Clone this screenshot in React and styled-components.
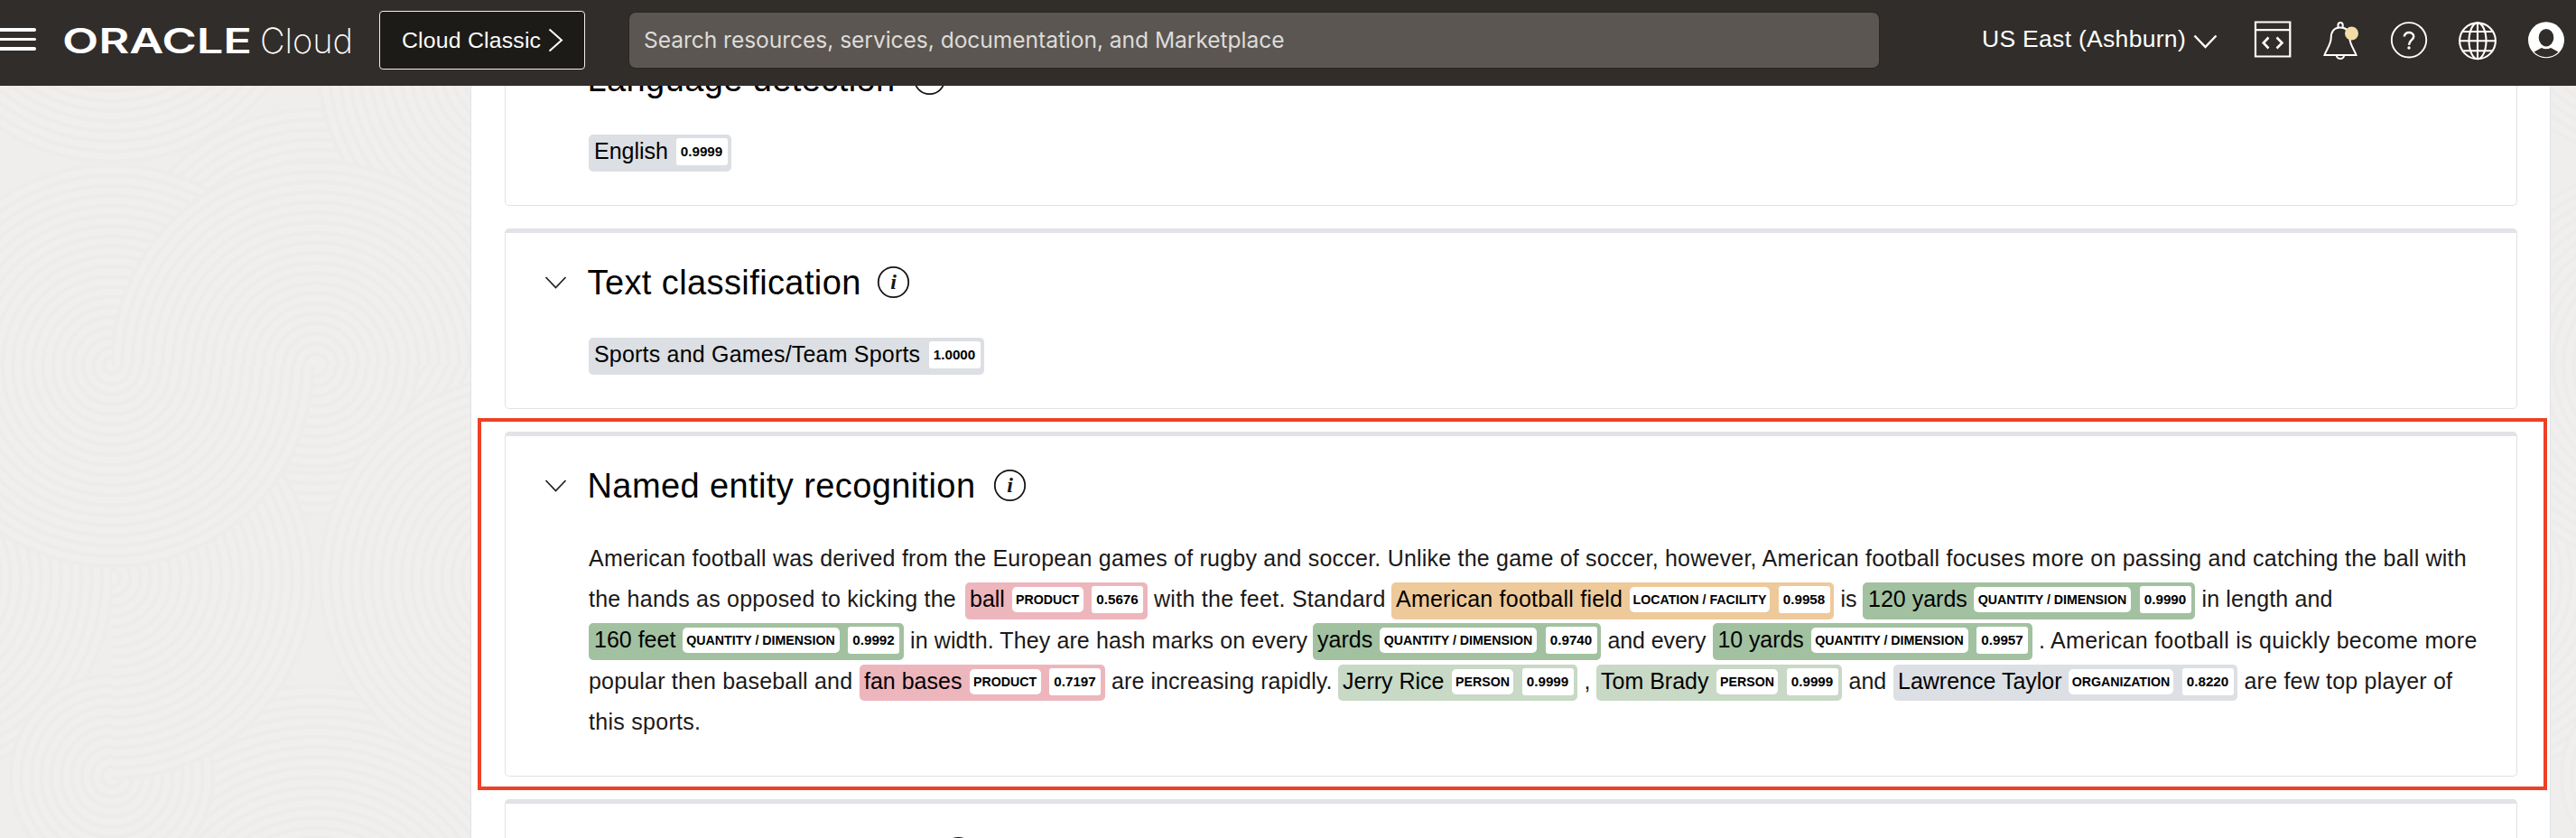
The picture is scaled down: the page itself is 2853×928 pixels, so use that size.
import React from "react";
import styled, { createGlobalStyle } from "styled-components";

const Global = createGlobalStyle`
  * { box-sizing: border-box; }
  html, body { margin: 0; padding: 0; overflow: hidden; }
  body { font-family: "Liberation Sans", Arial, sans-serif; color: #000; background: #fff; }
`;

const Page = styled.div`
  width: 2853px;
  height: 928px;
  overflow: hidden;
  position: relative;
`;

const Header = styled.header`
  position: absolute;
  inset: 0 0 auto 0;
  z-index: 2;
  height: 95px;
  background: #312d2a;
  color: #fff;
  display: flex;
  align-items: flex-start;
`;

const MenuButton = styled.div`
  width: 40px;
  margin: 31px 28px 0 0;
  display: flex;
  flex-direction: column;
  gap: 7px;
`;

const MenuBar = styled.span`
  height: 3.5px;
  background: #fff;
  border-radius: 0 2px 2px 0;
`;

const Logo = styled.svg`
  display: block;
  width: 352px;
  height: 95px;
  flex: none;
`;

const ClassicButton = styled.div`
  width: 228px;
  height: 65px;
  margin: 12px 49px 0 0;
  border: 1.5px solid #f1efed;
  border-radius: 4px;
  background: #1c1b17;
  padding: 0 0 0 24px;
  display: flex;
  align-items: center;
  gap: 8px;
  font-size: 24.8px;
  line-height: 61px;
  letter-spacing: 0.2px;
  white-space: nowrap;
`;

const Search = styled.div`
  width: 1384px;
  height: 61px;
  margin-top: 14px;
  padding-left: 16px;
  border-radius: 7px;
  background: #5b5651;
  color: #dedbd8;
  font-family: Inter, sans-serif;
  font-size: 24.6px;
  line-height: 61px;
  letter-spacing: -0.06px;
  box-shadow: 0 0 0 1px #2a2623;
  white-space: nowrap;
`;

const Region = styled.div`
  width: 296.5px;
  margin-left: 114px;
  padding-top: 26px;
  display: flex;
  gap: 7.5px;
  font-size: 26.5px;
  line-height: 34px;
  letter-spacing: 0.3px;
  white-space: nowrap;
`;

const RegionChevron = styled.svg`
  margin-top: 11px;
  flex: none;
`;

const Tools = styled.div`
  display: flex;
  padding-top: 20px;
  gap: 25.8px;
`;

const ToolIcon = styled.svg`
  width: 50px;
  height: 50px;
  display: block;
  flex: none;
`;

const Body = styled.div`
  display: flex;
  height: 928px;
`;

const Gutter = styled.div`
  width: ${(p) => p.$width}px;
  flex: none;
  overflow: hidden;
  background: #efeeec;
`;

const Panel = styled.main`
  flex: 1;
  height: 928px;
  overflow: hidden;
  background: #fff;
  border: solid #e1e2e5;
  border-width: 0 1.5px;
  padding: 28px 36.5px 0 37px;
  display: flex;
  flex-direction: column;
  gap: 25px;
`;

const Card = styled.section`
  flex: none;
  height: ${(p) => p.$height}px;
  border: 1.5px solid #e1e2e6;
  border-top: 5px solid #e2e2e7;
  border-radius: 5px;
  padding: 27px 0 0 43px;
`;

const CardHead = styled.div`
  display: flex;
  align-items: center;
  height: 56px;
`;

const CardTitle = styled.h2`
  flex: none;
  width: ${(p) => p.$width}px;
  margin: 0 0 0 22.5px;
  font-size: 38px;
  font-weight: 400;
  line-height: 56px;
  white-space: nowrap;
  letter-spacing: 0.4px;
`;

const Info = styled.svg`
  width: 37px;
  height: 37px;
  margin-bottom: 2px;
`;

const Chevron = styled.svg`
  width: 25px;
  height: 16px;
`;

const CardBody = styled.div`
  display: flex;
  margin: 33px 0 0 49px;
`;

const Paragraph = styled.div`
  margin: 31.4px 0 0 49px;
  color: #1b1918;
`;

const Line = styled.div`
  display: flex;
  align-items: center;
  gap: 7.5px;
  height: 45.25px;
  font-size: 25px;
  white-space: pre;
`;

const Run = styled.span`
  flex: none;
  width: ${(p) => p.$width}px;
  margin-bottom: 3px;
  letter-spacing: ${(p) => p.$spacing || 0}px;
  line-height: 45px;
`;

const tones = {
  gray: "#dcdfe3",
  pink: "#edb6bd",
  orange: "#eec99a",
  green: "#a2c1a0",
  mint: "#c8d9c5",
};

const Tag = styled.span`
  flex: none;
  display: flex;
  align-items: flex-start;
  width: ${(p) => p.$width}px;
  height: 40.5px;
  padding: 4px 4.5px 0 ${(p) => p.$lead || 5}px;
  border-radius: 5px;
  background: ${(p) => tones[p.$tone]};
  color: #000;
  font-size: 25px;
  white-space: pre;
`;

const TagText = styled.span`
  flex: 1;
  margin-top: -1px;
  line-height: 31px;
  letter-spacing: ${(p) => p.$spacing || 0}px;
`;

const Kind = styled.span`
  flex: none;
  width: ${(p) => p.$width}px;
  height: 28px;
  margin: 1px 9.5px 0 0;
  border-radius: 5px;
  background: #fff;
  font-size: 14.2px;
  font-weight: 700;
  line-height: 28px;
  text-align: center;
`;

const Score = styled.span`
  flex: none;
  width: 57px;
  height: 30px;
  border-radius: 3px;
  background: #fff;
  font-size: 15.2px;
  font-weight: 700;
  line-height: 30px;
  text-align: center;
`;

const Highlight = styled.div`
  position: absolute;
  left: 529px;
  top: 463px;
  width: 2292px;
  height: 412px;
  border: 4px solid #ee4026;
`;

const kindWidths = {
  PRODUCT: 79,
  "LOCATION / FACILITY": 155,
  "QUANTITY / DIMENSION": 174,
  PERSON: 68,
  ORGANIZATION: 116,
};

function Rings({ cx, cy, r }) {
  const rings = [];
  for (let i = r; i > 4; i -= 11.2) rings.push(i);
  return (
    <g>
      <circle cx={cx} cy={cy} r={r} fill="#f0efed" />
      {rings.map((v) => (
        <circle key={v} cx={cx} cy={cy} r={v} fill="none" stroke="#edecea" strokeWidth="4.5" />
      ))}
    </g>
  );
}

function Pattern({ id }) {
  return (
    <svg width="530" height="928" viewBox="0 0 530 928">
      <defs>
        <clipPath id={id + "upper"}><rect x="124" y="0" width="420" height="405" /></clipPath>
        <clipPath id={id + "lower"}><rect x="0" y="405" width="420" height="540" /></clipPath>
        <clipPath id={id + "right"}><rect x="124" y="500" width="420" height="500" /></clipPath>
      </defs>
      <Rings cx={350} cy={345} r={224} />
      <Rings cx={124} cy={-45} r={224} />
      <Rings cx={577} cy={70} r={224} />
      <Rings cx={124} cy={405} r={222} />
      <Rings cx={350} cy={1050} r={290} />
      <Rings cx={350} cy={405} r={112} />
      <g clipPath={`url(#${id}upper)`}><Rings cx={350} cy={405} r={226} /></g>
      <Rings cx={-100} cy={640} r={224} />
      <Rings cx={577} cy={640} r={222} />
      <Rings cx={124} cy={860} r={112} />
      <g clipPath={`url(#${id}right)`}><Rings cx={124} cy={640} r={222} /></g>
      <g clipPath={`url(#${id}lower)`}><Rings cx={124} cy={405} r={222} /></g>
    </svg>
  );
}

function Section({ title, height, titleWidth, children }) {
  return (
    <Card $height={height}>
      <CardHead>
        <Chevron viewBox="0 0 25 16" fill="none" stroke="#222" strokeWidth="1.8">
          <path d="M1.5 2 12.5 13.500 23.5 2" />
        </Chevron>
        <CardTitle $width={titleWidth}>{title}</CardTitle>
        <Info viewBox="0 0 37 37">
          <circle cx="18.5" cy="18.5" r="16.7" fill="none" stroke="#161513" strokeWidth="1.8" />
          {title && (
            <text x="18.5" y="26" textAnchor="middle" fontFamily="Liberation Serif, serif" fontStyle="italic" fontWeight="700" fontSize="24" fill="#161513">i</text>
          )}
        </Info>
      </CardHead>
      {children}
    </Card>
  );
}

function Entity({ text, kind, score, tone, lead, spacing, width }) {
  return (
    <Tag $tone={tone} $lead={lead} $width={width}>
      <TagText $spacing={spacing}>{text}</TagText>
      {kind && <Kind $width={kindWidths[kind]}>{kind}</Kind>}
      <Score>{score}</Score>
    </Tag>
  );
}

export default function App() {
  return (
    <Page>
      <Global />
      <Header>
        <MenuButton>
          <MenuBar />
          <MenuBar />
          <MenuBar />
        </MenuButton>
        <Logo viewBox="0 0 352 95" fill="#fff">
          <text x="1" y="58.7" fontFamily="Inter, sans-serif" fontWeight="600" fontSize="37.6" textLength="210" lengthAdjust="spacingAndGlyphs">ORACLE</text>
          <text x="220" y="58.7" fontFamily="Inter, sans-serif" fontWeight="200" fontSize="38.5" textLength="103" lengthAdjust="spacingAndGlyphs">Cloud</text>
        </Logo>
        <ClassicButton>
          Cloud Classic
          <svg width="17" height="27" viewBox="0 0 17 27" fill="none" stroke="#fff" strokeWidth="2">
            <path d="M1.5 1.5 15 13.5 1.5 25.5" />
          </svg>
        </ClassicButton>
        <Search>Search resources, services, documentation, and Marketplace</Search>
        <Region>
          US East (Ashburn)
          <RegionChevron width="27" height="18" viewBox="0 0 27 18" fill="none" stroke="#fff" strokeWidth="2.4">
            <path d="M1.5 2.5 13.5 15 25.5 2.5" />
          </RegionChevron>
        </Region>
        <Tools>
          <ToolIcon viewBox="0 0 50 50" fill="none" stroke="#fff" strokeWidth="2.2">
            <path d="M6 4.500H44.300V42.500H6ZM6 13.200H44.300" />
            <path d="M20.500 21.500 14.800 27.500 20.500 33.500M29.500 21.500 35.500 27.500 29.500 33.500" strokeWidth="2.6" />
          </ToolIcon>
          <ToolIcon viewBox="0 0 50 50" fill="none" stroke="#fff" strokeWidth="2">
            <path d="M22.500 10.500V7.500A2.600 2.600 0 0 1 27.700 7.500V10.500" />
            <path d="M25 10.500C18 10.500 14.700 15 14.700 22 14.700 29 9.500 35 7.500 41H42.500C40.500 35 35.300 29 35.300 22 35.300 15 32 10.500 25 10.500ZM20.800 41C20.800 46.300 29.200 46.300 29.200 41" />
            <circle cx="37.500" cy="17" r="7.500" fill="#f2dda4" stroke="none" />
          </ToolIcon>
          <ToolIcon viewBox="0 0 50 50" fill="none" stroke="#fff" strokeWidth="1.900">
            <circle cx="25" cy="24.300" r="19.200" />
            <path d="M19.800 20.500C19.800 14.500 30.200 14.800 30.200 20.500 30.200 24 25 24.500 25 29.800" strokeWidth="2.500" />
            <circle cx="25" cy="33" r="1.700" fill="#fff" stroke="none" />
          </ToolIcon>
          <ToolIcon viewBox="0 0 50 50" fill="none" stroke="#fff" strokeWidth="2.1">
            <circle cx="25" cy="25.300" r="19.900" />
            <ellipse cx="25" cy="25.300" rx="9.500" ry="19.900" />
            <path d="M25 5.500V45M5 25.300H45M8.500 15H41.500M8.500 36.300H41.500" />
          </ToolIcon>
          <ToolIcon viewBox="0 0 50 50">
            <circle cx="25" cy="24.300" r="20" fill="#fff" />
            <ellipse cx="25" cy="21.700" rx="8.300" ry="9.700" fill="#312d2a" />
            <path d="M11.500 37.500 19.800 33Q25 35.500 30.200 33L38.500 37.500A19 19 0 0 1 11.500 37.500Z" fill="#312d2a" />
          </ToolIcon>
        </Tools>
      </Header>

      <Body>
        <Gutter $width={521}><Pattern id="l" /></Gutter>
        <Panel>
          <Section title="Language detection" height={200} titleWidth={360}>
            <CardBody><Entity text="English" score="0.9999" tone="gray" lead={6} width={158} /></CardBody>
          </Section>
          <Section title="Text classification" height={200} titleWidth={320}>
            <CardBody><Entity text="Sports and Games/Team Sports" score="1.0000" tone="gray" lead={6} width={438} spacing={0.2} /></CardBody>
          </Section>
          <Section title="Named entity recognition" height={382} titleWidth={449}>
            <Paragraph>
              <Line>
                <Run $spacing={0.215}>American football was derived from the European games of rugby and soccer. Unlike the game of soccer, however, American football focuses more on passing and catching the ball with</Run>
              </Line>
              <Line>
                <Run $width={409.5} $spacing={0.23}>the hands as opposed to kicking the</Run>
                <Entity text="ball" kind="PRODUCT" score="0.5676" tone="pink" width={201.5} />
                <Run $width={255.5} $spacing={0.28}>with the feet. Standard</Run>
                <Entity text="American football field" kind="LOCATION / FACILITY" score="0.9958" tone="orange" width={490} spacing={0.23} />
                <Run $width={17}>is</Run>
                <Entity text="120 yards" kind="QUANTITY / DIMENSION" score="0.9990" tone="green" width={368} lead={6} />
                <Run $spacing={0.15}>in length and</Run>
              </Line>
              <Line>
                <Entity text="160 feet" kind="QUANTITY / DIMENSION" score="0.9992" tone="green" width={348.5} lead={6} />
                <Run $width={438.5} $spacing={0.11}>in width. They are hash marks on every</Run>
                <Entity text="yards" kind="QUANTITY / DIMENSION" score="0.9740" tone="green" width={319} />
                <Run $width={108.5} $spacing={-0.1}>and every</Run>
                <Entity text="10 yards" kind="QUANTITY / DIMENSION" score="0.9957" tone="green" width={354} lead={6} spacing={-0.1} />
                <Run $spacing={0.28}>. American football is quickly become more</Run>
              </Line>
              <Line>
                <Run $width={292.5} $spacing={0.18}>popular then baseball and</Run>
                <Entity text="fan bases" kind="PRODUCT" score="0.7197" tone="pink" width={271.5} />
                <Run $width={243.5} $spacing={0.08}>are increasing rapidly.</Run>
                <Entity text="Jerry Rice" kind="PERSON" score="0.9999" tone="mint" width={265} />
                <Run $width={6}>,</Run>
                <Entity text="Tom Brady" kind="PERSON" score="0.9999" tone="mint" width={272} />
                <Run $width={42}>and</Run>
                <Entity text="Lawrence Taylor" kind="ORGANIZATION" score="0.8220" tone="gray" width={381} />
                <Run $spacing={0.2}>are few top player of</Run>
              </Line>
              <Line><Run $spacing={0.28}>this sports.</Run></Line>
            </Paragraph>
          </Section>
          <Section height={200} titleWidth={392} />
        </Panel>
        <Gutter $width={28}><Pattern id="r" /></Gutter>
      </Body>
      <Highlight />
    </Page>
  );
}
